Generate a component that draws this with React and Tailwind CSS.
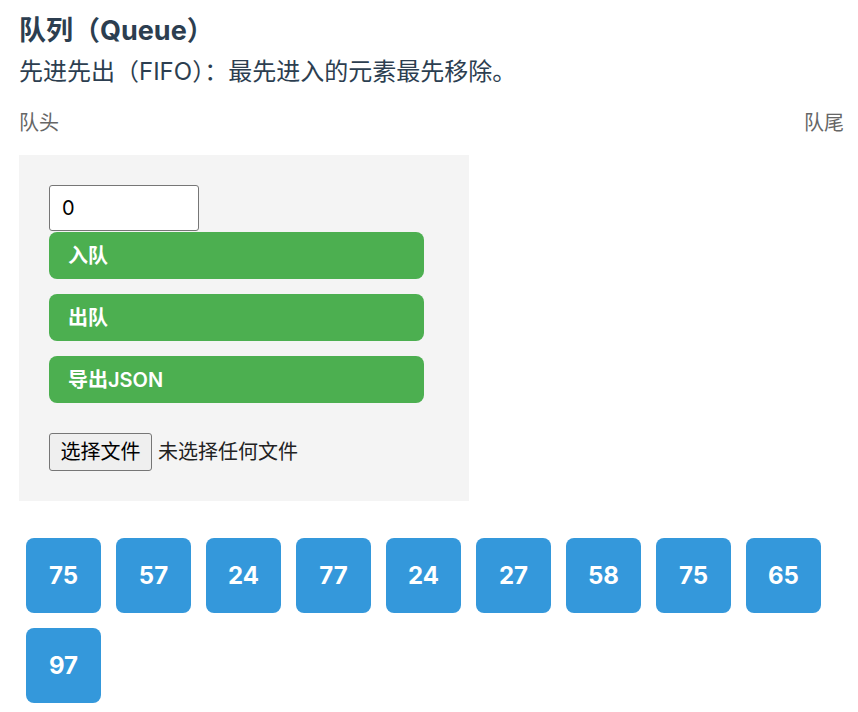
import React, { useState } from 'react';

const font = { fontFamily: 'Inter, "Noto Sans CJK SC", sans-serif' };

const initialQueue = [75, 57, 24, 77, 24, 27, 58, 75, 65, 97];

const ActionButton = ({ label, onClick, className = '' }) => (
  <button
    onClick={onClick}
    className={`w-[375px] h-[47px] rounded-[8px] bg-[#4caf50] text-white text-[20px] font-semibold text-left pl-[19px] ${className}`}
  >
    {label}
  </button>
);

const App = () => {
  const [queue, setQueue] = useState(initialQueue);
  const [value, setValue] = useState('0');

  const enqueue = () => setQueue([...queue, Number(value) || 0]);
  const dequeue = () => setQueue(queue.slice(1));

  return (
    <div className="min-h-screen bg-white pl-[19px] pr-[14px]" style={font}>
      {/* Header */}
      <h2 className="mt-[15px] text-[27px] leading-[32px] font-bold text-[#2c3e50]">
        队列（Queue）
      </h2>
      <p className="mt-[10px] text-[24px] leading-[30px] text-[#2c3e50]">
        先进先出（FIFO）：最先进入的元素最先移除。
      </p>

      {/* Head / tail labels */}
      <div className="mt-[22px] flex justify-between text-[20px] leading-[28px] text-[#666]">
        <span>队头</span>
        <span>队尾</span>
      </div>

      {/* Controls */}
      <div className="mt-[18px] w-[450px] bg-[#f4f4f4] p-[30px] flex flex-col">
        <input
          value={value}
          onChange={(e) => setValue(e.target.value)}
          className="w-[150px] h-[46px] bg-white border border-[#767676] rounded-[3px] px-[12px] text-[20px] text-black outline-none"
        />
        <ActionButton label="入队" onClick={enqueue} className="mt-[1px]" />
        <ActionButton label="出队" onClick={dequeue} className="mt-[15px]" />
        <ActionButton label="导出JSON" className="mt-[15px]" />
        <div className="mt-[30px] flex items-center gap-[6px] text-[20px] text-black">
          <button className="h-[38px] w-[103px] bg-[#efefef] border border-[#767676] rounded-[3px] leading-none">
            选择文件
          </button>
          <span className="text-[#222]">未选择任何文件</span>
        </div>
      </div>

      {/* Queue items */}
      <div className="mt-[37px] pl-[7px] flex flex-wrap gap-[15px]">
        {queue.map((n, i) => (
          <div
            key={i}
            className="w-[75px] h-[75px] rounded-[8px] bg-[#3498db] flex items-center justify-center text-white text-[24px] font-bold"
          >
            {n}
          </div>
        ))}
      </div>
    </div>
  );
};

export default App;
